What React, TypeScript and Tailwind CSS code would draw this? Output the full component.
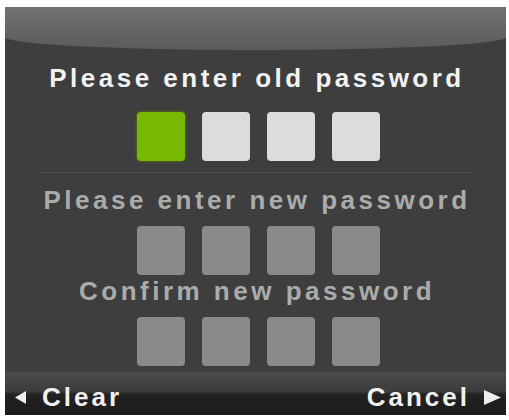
import React from "react";

const font = { fontFamily: '"Liberation Sans", Arial, sans-serif' };

function Row({ first, tone }: { first?: boolean; tone: "light" | "dim" }) {
  const base = tone === "light" ? "bg-[#dcdcdc]" : "bg-[#8a8a8a]";
  return (
    <div className="flex justify-center gap-[17px] pl-[6px]">
      {[0, 1, 2, 3].map((i) => (
        <div
          key={i}
          className={`w-[48px] h-[49px] rounded-[4px] ${
            first && i === 0 ? "bg-[#78b800] shadow-[0_0_3px_#5a8a00]" : base
          }`}
        />
      ))}
    </div>
  );
}

export default function App() {
  return (
    <div className="w-[509px] h-[420px] bg-white pt-[7px] pl-[5px] pr-[3px] pb-[5px]" style={font}>
      <div className="w-full h-full bg-[#3e3e3e] flex flex-col overflow-hidden">
        <div className="h-[43px] bg-gradient-to-b from-[#717171] to-[#5b5b5b] rounded-bl-[50%_13px] rounded-br-[50%_13px]" />
        <div className="mt-[14px] h-[28px] leading-[28px] text-center text-[26px] font-bold tracking-[3.5px] pl-[3px] text-[#f2f2f2]">
          Please enter old password
        </div>
        <div className="mt-[20px]">
          <Row first tone="light" />
        </div>
        <div className="mt-[11px] h-px mx-[32px] bg-[#4d4d4d]" />
        <div className="mt-[13px] h-[28px] leading-[28px] text-center text-[26px] font-bold tracking-[3.5px] pl-[3px] text-[#ababab]">
          Please enter new password
        </div>
        <div className="mt-[12px]">
          <Row tone="dim" />
        </div>
        <div className="mt-[2px] h-[28px] leading-[28px] text-center text-[26px] font-bold tracking-[3.5px] pl-[3px] text-[#ababab]">
          Confirm new password
        </div>
        <div className="mt-[12px]">
          <Row tone="dim" />
        </div>
        <div className="mt-auto h-[43px] bg-[linear-gradient(to_bottom,#4a4a4a_0%,#3c3c3c_45%,#222_52%,#1b1b1b_100%)] flex items-center justify-between pl-[10px] pr-[5px] pt-[8px] text-[26px] font-bold tracking-[3px] text-[#f0f0f0]">
          <div className="flex items-center gap-[16px]">
            <svg width="11" height="13" viewBox="0 0 11 13">
              <polygon points="11,0 11,13 0,6.5" fill="#eeeeee" />
            </svg>
            <span>Clear</span>
          </div>
          <div className="flex items-center gap-[14px]">
            <span>Cancel</span>
            <svg width="17" height="15" viewBox="0 0 17 15">
              <polygon points="0,0 0,15 17,7.5" fill="#eeeeee" />
            </svg>
          </div>
        </div>
      </div>
    </div>
  );
}
